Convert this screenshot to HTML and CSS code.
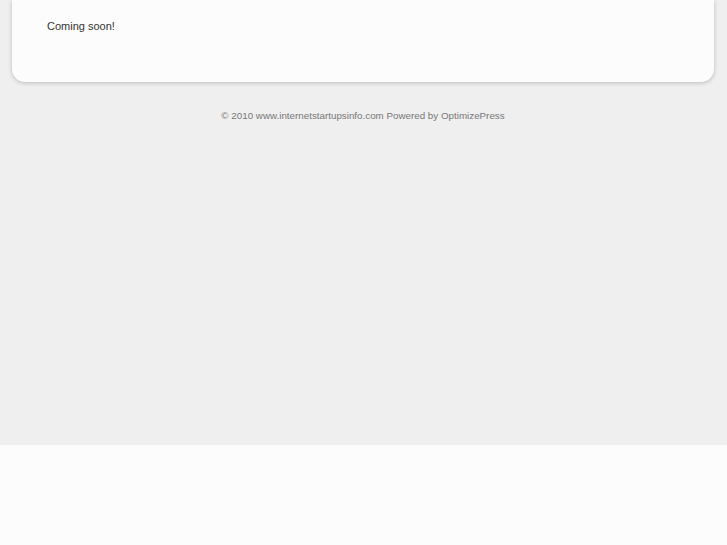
FILE: index.html
```html
<!DOCTYPE html>
<html>
<head>
<meta charset="utf-8">
<link rel="stylesheet" href="styles.css">
</head>
<body>
<div class="page">
  <div class="card">
    <p class="msg">Coming soon!</p>
  </div>
  <div class="footer">© 2010 www.internetstartupsinfo.com Powered by OptimizePress</div>
</div>
</body>
</html>
```
FILE: styles.css
```css
html, body {
  margin: 0;
  padding: 0;
  background: #fcfcfc;
  font-family: "Liberation Sans", Arial, sans-serif;
}
.page {
  height: 445px;
  background: #efefef;
  box-sizing: border-box;
  padding: 0 13px 0 12px;
}
.card {
  height: 82px;
  background: #fcfcfc;
  border-radius: 0 0 13px 13px;
  box-shadow: 0 1px 4px rgba(0,0,0,0.22);
  padding: 18px 35px 0;
  box-sizing: border-box;
}
.msg {
  margin: 0;
  font-size: 11px;
  line-height: 16px;
  color: #333;
}
.footer {
  text-align: center;
  font-size: 9.8px;
  color: #777;
  margin-top: 28px;
  line-height: 12px;
}
```
